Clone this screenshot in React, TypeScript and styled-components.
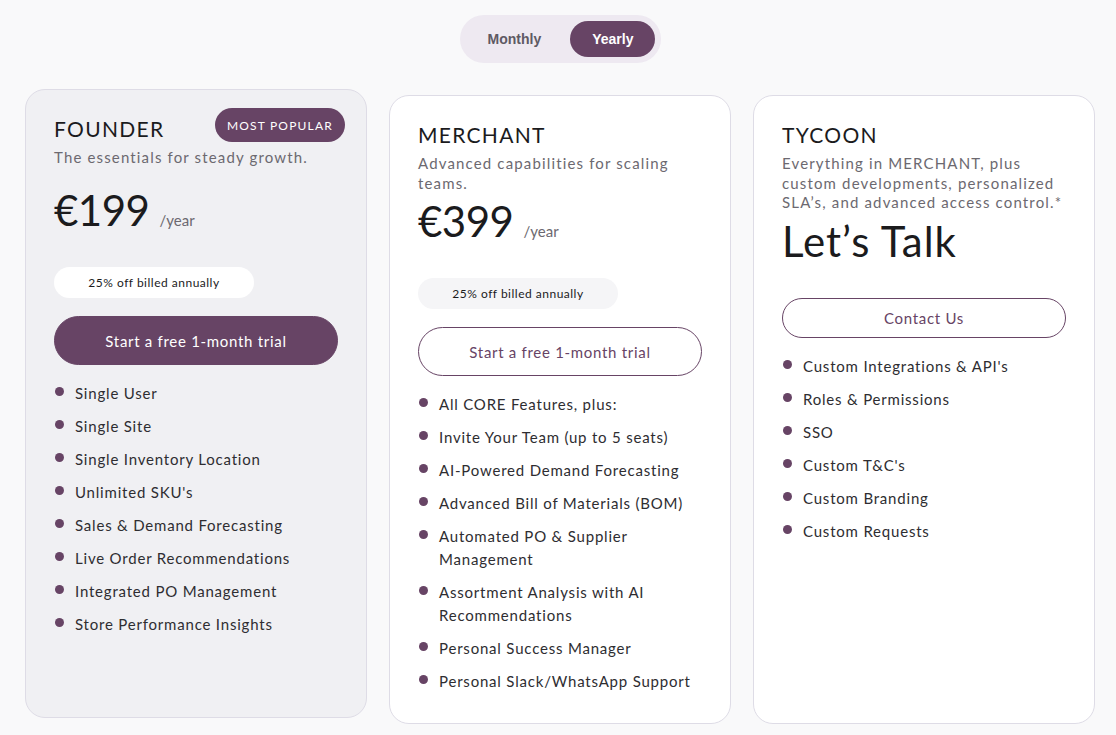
import React from "react";
import styled, { createGlobalStyle } from "styled-components";

const purple = "#674465";
const font = `"Lato", "Noto Sans", sans-serif`;

const Global = createGlobalStyle`
  html, body { margin: 0; padding: 0; background: #f9f9fa; }
  body { font-family: ${font}; -webkit-font-smoothing: antialiased; }
  * { box-sizing: border-box; }
`;

const Page = styled.main`
  display: flex;
  flex-direction: column;
  align-items: center;
  padding: 15px 20px 0 25px;
  gap: 32px;
`;

const Toggle = styled.div`
  display: flex;
  gap: 7px;
  padding: 6px;
  background: #eee9f1;
  border-radius: 24px;
`;

const ToggleButton = styled.button<{ $active?: boolean }>`
  border: none;
  height: 36px;
  padding: 0 22px;
  border-radius: 18px;
  font-family: "Liberation Sans", Arial, sans-serif;
  font-weight: 700;
  font-size: 14px;
  cursor: pointer;
  background: ${(p) => (p.$active ? purple : "transparent")};
  color: ${(p) => (p.$active ? "#ffffff" : "#5e5a64")};
`;

const Grid = styled.div`
  width: 100%;
  display: grid;
  grid-template-columns: repeat(3, 342px);
  gap: 22px;
  align-items: stretch;
`;

const Card = styled.section<{ $featured?: boolean }>`
  position: relative;
  display: flex;
  flex-direction: column;
  padding: 26px 28px 30px 28px;
  border-radius: 20px;
  border: 1px solid #dedce6;
  background: ${(p) => (p.$featured ? "#f0f0f3" : "#ffffff")};
  transform: ${(p) => (p.$featured ? "translateY(-6px)" : "none")};
`;

const Badge = styled.span`
  position: absolute;
  top: 18px;
  right: 21px;
  height: 34px;
  padding: 0 12px;
  display: flex;
  align-items: center;
  border-radius: 17px;
  background: ${purple};
  color: #fff;
  font-size: 12px;
  letter-spacing: 1.2px;
`;

const Title = styled.h2`
  margin: 0;
  font-size: 21px;
  font-weight: 400;
  letter-spacing: 1.3px;
  line-height: 26px;
  color: #1b1b1d;
`;

const Desc = styled.p`
  margin: 6px -6px 0 0;
  min-height: 34px;
  font-size: 15px;
  line-height: 19.5px;
  letter-spacing: 1.15px;
  color: #6c6970;
`;

const PriceRow = styled.div`
  display: flex;
  align-items: baseline;
  gap: 10px;
  margin-top: 4px;
  margin-bottom: 33px;
`;

const Amount = styled.span<{ $spacing?: number }>`
  font-size: 42px;
  line-height: 48px;
  color: #1b1b1d;
  letter-spacing: ${(p) => p.$spacing ?? -0.5}px;
`;

const Per = styled.span`
  font-size: 15px;
  color: #6c6970;
`;

const Saving = styled.div<{ $onGrey?: boolean }>`
  width: 200px;
  height: 31px;
  border-radius: 16px;
  display: flex;
  align-items: center;
  justify-content: center;
  font-size: 12px;
  letter-spacing: 0.5px;
  color: #1b1b1d;
  background: ${(p) => (p.$onGrey ? "#ffffff" : "#f5f5f7")};
  margin-bottom: 18px;
`;

const Cta = styled.button<{ $solid?: boolean; $h?: number }>`
  width: 100%;
  height: ${(p) => p.$h ?? 49}px;
  border-radius: 25px;
  font-family: ${font};
  font-size: 15px;
  letter-spacing: 0.7px;
  cursor: pointer;
  border: 1px solid ${purple};
  background: ${(p) => (p.$solid ? purple : "#ffffff")};
  color: ${(p) => (p.$solid ? "#ffffff" : purple)};
`;

const List = styled.ul`
  list-style: none;
  margin: 17px 0 0;
  padding: 0;
  display: flex;
  flex-direction: column;
  gap: 10px;
`;

const Item = styled.li`
  position: relative;
  padding-left: 21px;
  font-size: 15px;
  line-height: 23px;
  letter-spacing: 0.8px;
  color: #2e2d31;
  &::before {
    content: "";
    position: absolute;
    left: 1px;
    top: 5px;
    width: 9px;
    height: 9px;
    border-radius: 50%;
    background: ${purple};
  }
`;

type Plan = {
  name: string;
  desc: string;
  price?: string;
  talk?: boolean;
  featured?: boolean;
  features: string[];
};

const plans: Plan[] = [
  {
    name: "FOUNDER",
    desc: "The essentials for steady growth.",
    price: "€199",
    featured: true,
    features: [
      "Single User",
      "Single Site",
      "Single Inventory Location",
      "Unlimited SKU's",
      "Sales & Demand Forecasting",
      "Live Order Recommendations",
      "Integrated PO Management",
      "Store Performance Insights",
    ],
  },
  {
    name: "MERCHANT",
    desc: "Advanced capabilities for scaling teams.",
    price: "€399",
    features: [
      "All CORE Features, plus:",
      "Invite Your Team (up to 5 seats)",
      "AI-Powered Demand Forecasting",
      "Advanced Bill of Materials (BOM)",
      "Automated PO & Supplier Management",
      "Assortment Analysis with AI Recommendations",
      "Personal Success Manager",
      "Personal Slack/WhatsApp Support",
    ],
  },
  {
    name: "TYCOON",
    desc: "Everything in MERCHANT, plus custom developments, personalized SLA’s, and advanced access control.*",
    talk: true,
    features: [
      "Custom Integrations & API's",
      "Roles & Permissions",
      "SSO",
      "Custom T&C's",
      "Custom Branding",
      "Custom Requests",
    ],
  },
];

export default function App() {
  return (
    <>
      <Global />
      <Page>
        <Toggle>
          <ToggleButton>Monthly</ToggleButton>
          <ToggleButton $active>Yearly</ToggleButton>
        </Toggle>
        <Grid>
          {plans.map((p) => (
            <Card key={p.name} $featured={p.featured}>
              {p.featured && <Badge>MOST POPULAR</Badge>}
              <Title>{p.name}</Title>
              <Desc>{p.desc}</Desc>
              <PriceRow>
                {p.talk ? (
                  <Amount $spacing={1}>Let’s Talk</Amount>
                ) : (
                  <>
                    <Amount>{p.price}</Amount>
                    <Per>/year</Per>
                  </>
                )}
              </PriceRow>
              {!p.talk && <Saving $onGrey={p.featured}>25% off billed annually</Saving>}
              <Cta $solid={p.featured} $h={p.talk ? 40 : 49}>
                {p.talk ? "Contact Us" : "Start a free 1-month trial"}
              </Cta>
              <List>
                {p.features.map((f) => (
                  <Item key={f}>{f}</Item>
                ))}
              </List>
            </Card>
          ))}
        </Grid>
      </Page>
    </>
  );
}
